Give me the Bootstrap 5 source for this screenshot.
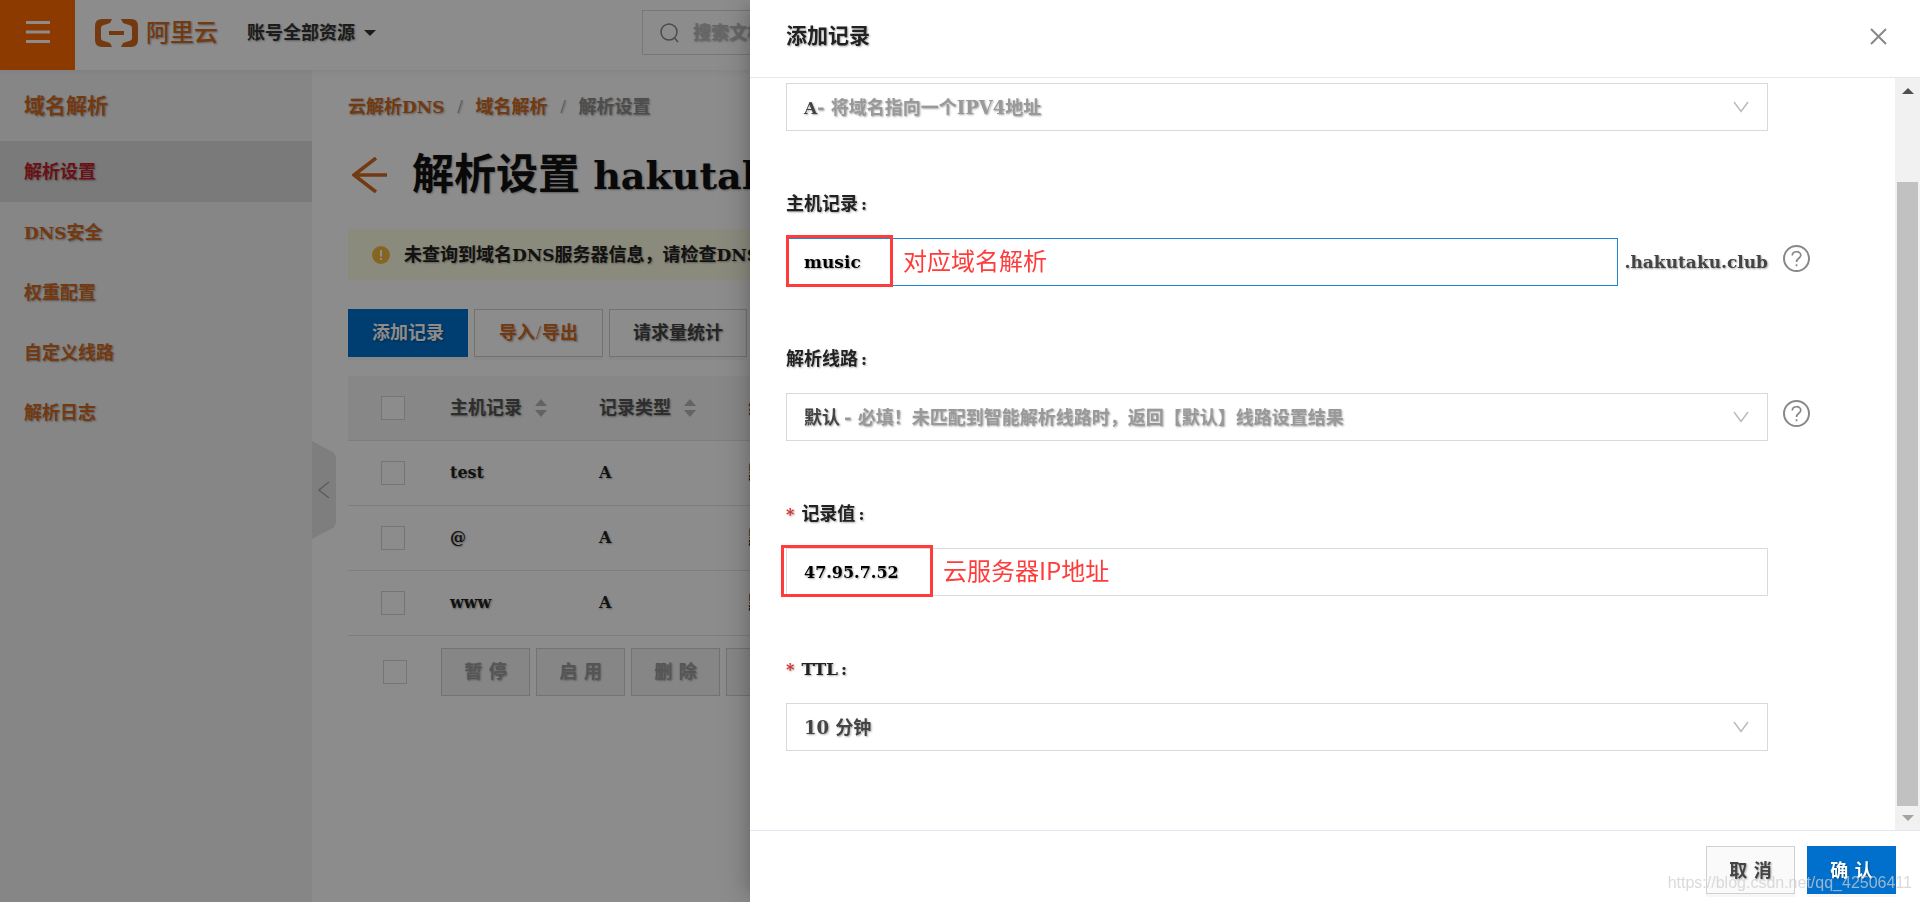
<!DOCTYPE html>
<html lang="zh-CN">
<head>
<meta charset="utf-8">
<meta name="viewport" content="width=device-width, initial-scale=1">
<title>解析设置</title>
<link rel="stylesheet" href="https://cdn.jsdelivr.net/npm/bootstrap@5.3.0/dist/css/bootstrap.min.css">
<style>
  body { font: bold 18px/24px "DejaVu Serif", "Noto Sans CJK SC", serif; color: #333; text-shadow: 1px 1px 2px rgba(0,0,0,.35); background: #fff; }
  a { color: chocolate; text-decoration: none; }
  svg { display: block; fill: none; flex: none; }
  .latin { font-size: 17px; }
  .shell { height: 100vh; }

  .topbar { height: 70px; box-shadow: 0 2px 6px rgba(0,0,0,.06); z-index: 2; }
  .menu-btn { width: 75px; background: #ff6a00; border: 0; }
  .brand-name { font-size: 24px; font-weight: 500; line-height: 32px; color: chocolate; }
  .account { margin-left: 29px; gap: 9px; }
  .caret-down { border: 6px solid transparent; border-top-color: #333; border-bottom: 0; }
  .search-area { padding: 10px 0 0 266px; }
  .search-box { width: 460px; height: 45px; border: 1px solid #d9d9d9; padding-left: 17px; gap: 14px; }
  .search-box input { font: inherit; border: 0; outline: 0; padding: 0; background: none; text-shadow: inherit; }
  .search-box input::placeholder { color: #bbb; }

  .side { width: 312px; background: #f5f5f5; }
  .side h2 { font-size: 21px; font-weight: bold; line-height: 71px; color: chocolate; padding-left: 24px; margin: 0; }
  .side .nav-link { height: 60px; padding: 19px 24px 0; color: chocolate; }
  .side .nav-link.active { background: #dedede; color: #c41f2a; height: 61px; }
  .fold { left: 312px; top: 441px; width: 24px; height: 98px; border: 0; padding: 0 0 0 6px; background: #e6e6e6; clip-path: polygon(0 0, 92% 12%, 100% 17%, 100% 83%, 92% 88%, 0 100%); }

  .content { padding: 25px 36px; overflow: hidden; }
  .crumbs { height: 24px; gap: 13px; color: #8c8c8c; margin-bottom: 23px; }
  .slash { font-family: "Liberation Serif", serif; font-weight: normal; }
  .act .slash { margin: 0 1px; }
  .page-title { height: 66px; font-size: 42px; font-weight: bold; line-height: 66px; color: #111; margin: 0; white-space: nowrap; }
  .page-title .latin { font-size: 38px; }
  .notice { background: #fcfce4; height: 51px; padding: 0 24px; gap: 14px; color: #222; white-space: nowrap; margin: 21px 0 29px; }
  .tools { gap: 6px; margin-bottom: 19px; }
  .act { font: inherit; text-shadow: inherit; height: 48px; padding: 0 23px; border: 1px solid #d0d0d0; border-radius: 0; background: #fff; color: #444; box-shadow: 0 3px 0 rgba(0,0,0,.03); white-space: nowrap; }
  .act.blue { background: #0070cc; border-color: #0070cc; color: #fff; }
  .act.link { color: chocolate; padding: 0 24px; }
  .act:disabled { background: #f5f5f5; border-color: #d2d2d2; color: #9c9c9c; opacity: 1; box-shadow: none; }
  .act.two { width: 89px; padding: 0; }

  .records { width: 100%; table-layout: fixed; }
  .records th { background: #f6f6f6; height: 64px; color: #555; }
  .records td { height: 65px; color: #222; }
  .records th, .records td { padding: 0 16px; border-bottom: 1px solid #e3e3e3; white-space: nowrap; }
  .records .latin { font-size: 16px; }
  .records .pick { width: 86px; padding-left: 33px; }
  .records .col-a { width: 149px; }
  .sorter { gap: 13px; }
  .tick { appearance: none; display: block; width: 24px; height: 24px; border: 1px solid #d5d5d5; background: #fff; margin: 0; }
  .batch { padding: 12px 0 0 35px; gap: 6px; }

  .veil { background: rgba(0,0,0,.45); z-index: 1040; }
  .drawer { left: 750px; z-index: 1045; box-shadow: -6px 0 16px -8px rgba(0,0,0,.2), -9px 0 28px rgba(0,0,0,.14); }
  .drawer-head { height: 78px; padding: 0 33px 5px 36px; border-bottom: 1px solid #e8e8e8; }
  .drawer-head h1 { font-size: 21px; line-height: 32px; font-weight: bold; color: #222; margin: 0; }
  .bare { border: 0; background: none; padding: 0; }
  .fields { padding: 5px 85px 0 36px; overflow: hidden; }
  .field { display: grid; grid-template-columns: 1fr 27px; column-gap: 15px; margin-bottom: 61px; }
  .field label { grid-column: 1 / 3; height: 24px; color: #222; margin-bottom: 22px; }
  .field .need { color: #d93026; font-size: 16px; margin-right: 7px; }
  .field .colon { margin-left: 3px; font-size: 16px; }
  .box { font: inherit; text-shadow: inherit; width: 100%; height: 48px; border: 1px solid #d9d9d9; border-radius: 0; padding: 0 17px; background: #fff; color: #000; outline: 0; }
  input.box { font-size: 16px; }
  input.box.live { border-color: #2185d0; font-size: 17px; }
  select.box { appearance: none; color: #999; padding-top: 1px; }
  .prefix { left: 18px; top: 13px; color: #444; pointer-events: none; }
  select.after-letter { padding-left: 30px; }
  select.after-word { padding-left: 57px; }
  select.box.solid { color: #444; }
  .arrow { right: 19px; top: 18px; pointer-events: none; }
  .suffix { color: #444; font-size: 17px; margin-left: 7px; }
  .help { margin-top: 7px; }

  .callout { border: 3px solid #ff3b3b; pointer-events: none; height: 52px; top: -3px; }
  .callout span { position: absolute; left: 100%; top: 4px; margin-left: 13px; font: 24px/36px "Noto Sans CJK SC", sans-serif; color: #ff3b3b; white-space: nowrap; text-shadow: none; }
  .host { left: 0; width: 107px; }
  .ip { left: -5px; width: 152px; }

  .rail { width: 25px; background: #f1f1f1; padding: 10px 2px 9px; }
  .rail .up { border: 6px solid transparent; border-bottom-color: #505050; border-top: 0; }
  .rail .down { border: 6px solid transparent; border-top-color: #a3a3a3; border-bottom: 0; }
  .rail .thumb { width: 21px; flex: 1; margin: 88px 0 9px; background: #c1c1c1; }
  .drawer-foot { height: 72px; padding: 15px 24px 0; gap: 12px; border-top: 1px solid #dfe8f0; }
  .drawer-foot .act { padding-top: 2px; }
  .drawer-foot .act.plain { background: #fafafa; }
  .stamp { right: 8px; bottom: 7px; font: 16px/24px "Liberation Sans", sans-serif; color: rgba(205,205,205,.75); text-shadow: none; pointer-events: none; }
</style>
</head>
<body>
<div class="shell d-flex flex-column overflow-hidden">
  <header class="topbar d-flex align-items-stretch position-relative bg-white flex-shrink-0">
    <button class="menu-btn d-flex justify-content-center pt-3" aria-label="菜单">
      <svg class="mt-1" width="24" height="24" stroke="#fff" stroke-width="3"><path d="M0 2.500H24M0 12H24M0 21.500H24"/></svg>
    </button>
    <a class="d-flex align-items-center ms-3 ps-1 pb-1" href="#">
      <svg width="43" height="28" viewBox="0 0 43 28"><path fill="#d2691e" d="M17 0H7Q0 0 0 7V21Q0 28 7 28H17L15 24 7.500 21.500Q6 21 6 19V9Q6 7 7.500 6.500L15 4ZM26 0H36Q43 0 43 7V21Q43 28 36 28H26L28 24 35.500 21.500Q37 21 37 19V9Q37 7 35.500 6.500L28 4ZM14 12H29V16H14Z"/></svg>
      <span class="brand-name ms-2">阿里云</span>
    </a>
    <a class="account d-flex align-items-center text-reset pb-1" href="#">账号全部资源<span class="caret-down"></span></a>
    <div class="search-area flex-fill">
      <div class="search-box d-flex align-items-center">
        <svg width="19" height="20" stroke="#888" stroke-width="1.5"><circle cx="9" cy="9" r="8"/><path d="M14.500 15L18 19"/></svg>
        <input type="search" class="flex-fill" placeholder="搜索文档" aria-label="搜索">
      </div>
    </div>
  </header>
  <div class="d-flex flex-fill">
    <aside class="side flex-shrink-0">
      <h2>域名解析</h2>
      <nav class="nav flex-column">
        <a class="nav-link active" href="#">解析设置</a>
        <a class="nav-link" href="#"><span class="latin">DNS</span>安全</a>
        <a class="nav-link" href="#">权重配置</a>
        <a class="nav-link" href="#">自定义线路</a>
        <a class="nav-link" href="#">解析日志</a>
      </nav>
    </aside>
    <button class="fold position-absolute" aria-label="收起">
      <svg width="12" height="18" stroke="#aaa" stroke-width="1.5"><path d="M11 1L1 9L11 17"/></svg>
    </button>
    <main class="content flex-fill">
      <nav class="crumbs d-flex">
        <a href="#">云解析<span class="latin">DNS</span></a><span class="slash">/</span><a href="#">域名解析</a><span class="slash">/</span><span>解析设置</span>
      </nav>
      <div class="d-flex align-items-center">
        <a class="ms-1 me-4" href="#" aria-label="返回"><svg width="36" height="36" stroke="#d2691e" stroke-width="3.500"><path d="M35 18H2M24 1L2 18L24 35"/></svg></a>
        <h1 class="page-title">解析设置<span class="latin"> hakutaku</span></h1>
      </div>
      <div class="notice d-flex align-items-center">
        <svg width="18" height="18"><circle cx="9" cy="9" r="9" fill="#f5b83d"/><path d="M9 4V10.500M9 12V14" stroke="#fff" stroke-width="2"/></svg>
        <span>未查询到域名<span class="latin">DNS</span>服务器信息，请检查<span class="latin">DNS</span></span>
      </div>
      <div class="tools d-flex">
        <button class="act blue">添加记录</button>
        <button class="act link">导入<span class="slash">/</span>导出</button>
        <button class="act">请求量统计</button>
      </div>
      <table class="records">
        <thead><tr>
          <th class="pick"><input class="tick" type="checkbox" aria-label="全选"></th>
          <th class="col-a"><div class="sorter d-flex align-items-center">主机记录<svg width="12" height="18"><path fill="#b5b5b5" d="M0 7L6 0L12 7ZM0 11L6 18L12 11Z"/></svg></div></th>
          <th class="col-a"><div class="sorter d-flex align-items-center">记录类型<svg width="12" height="18"><path fill="#b5b5b5" d="M0 7L6 0L12 7ZM0 11L6 18L12 11Z"/></svg></div></th>
          <th>线</th>
        </tr></thead>
        <tbody>
          <tr><td class="pick"><input class="tick" type="checkbox" aria-label="test"></td><td class="latin">test</td><td class="latin">A</td><td>默</td></tr>
          <tr><td class="pick"><input class="tick" type="checkbox" aria-label="@"></td><td class="latin">@</td><td class="latin">A</td><td>默</td></tr>
          <tr><td class="pick"><input class="tick" type="checkbox" aria-label="www"></td><td class="latin">www</td><td class="latin">A</td><td>默</td></tr>
        </tbody>
      </table>
      <div class="batch d-flex align-items-center">
        <input class="tick me-4" type="checkbox" aria-label="批量选择">
        <button class="act two ms-1" disabled>暂 停</button>
        <button class="act two" disabled>启 用</button>
        <button class="act two" disabled>删 除</button>
        <button class="act two" disabled aria-label="更多"></button>
      </div>
    </main>
  </div>
</div>

<div class="veil position-fixed top-0 start-0 w-100 h-100"></div>
<section class="drawer position-fixed top-0 bottom-0 end-0 bg-white d-flex flex-column" role="dialog" aria-label="添加记录">
  <div class="drawer-head d-flex align-items-center justify-content-between flex-shrink-0">
    <h1>添加记录</h1>
    <button class="bare" aria-label="关闭"><svg width="17" height="17" stroke="#888" stroke-width="2"><path d="M1 1L16 16M16 1L1 16"/></svg></button>
  </div>
  <div class="d-flex flex-fill overflow-hidden">
    <form class="fields flex-fill">
      <div class="field">
        <div class="position-relative">
          <select class="box after-letter" aria-label="记录类型"><option>- 将域名指向一个IPV4地址</option></select>
          <span class="prefix latin position-absolute">A</span>
          <svg class="arrow position-absolute" width="16" height="12" stroke="#bbb" stroke-width="1.5"><path d="M1 1L8 10.500L15 1"/></svg>
        </div>
      </div>
      <div class="field">
        <label for="host">主机记录<span class="colon">:</span></label>
        <div class="d-flex align-items-center position-relative">
          <input id="host" class="box live" type="text" value="music">
          <span class="suffix">.hakutaku.club</span>
          <div class="callout host position-absolute"><span>对应域名解析</span></div>
        </div>
        <svg class="help" width="27" height="27" viewBox="0 0 27 27" stroke="#888" stroke-width="2"><circle cx="13.500" cy="13.500" r="12.500"/><path d="M9.300 10.500C9.300 5.500 17.800 5.500 17.800 10.300C17.800 13.300 13.500 13.300 13.500 17M13.500 19.200V21.200" stroke-width="1.700"/></svg>
      </div>
      <div class="field">
        <label for="line">解析线路<span class="colon">:</span></label>
        <div class="position-relative">
          <select id="line" class="box after-word"><option>- 必填！未匹配到智能解析线路时，返回【默认】线路设置结果</option></select>
          <span class="prefix position-absolute">默认</span>
          <svg class="arrow position-absolute" width="16" height="12" stroke="#bbb" stroke-width="1.5"><path d="M1 1L8 10.500L15 1"/></svg>
        </div>
        <svg class="help" width="27" height="27" viewBox="0 0 27 27" stroke="#888" stroke-width="2"><circle cx="13.500" cy="13.500" r="12.500"/><path d="M9.300 10.500C9.300 5.500 17.800 5.500 17.800 10.300C17.800 13.300 13.500 13.300 13.500 17M13.500 19.200V21.200" stroke-width="1.700"/></svg>
      </div>
      <div class="field">
        <label for="value"><span class="need">*</span>记录值<span class="colon">:</span></label>
        <div class="position-relative">
          <input id="value" class="box" type="text" value="47.95.7.52">
          <div class="callout ip position-absolute"><span>云服务器IP地址</span></div>
        </div>
      </div>
      <div class="field">
        <label for="ttl"><span class="need">*</span><span class="latin">TTL</span><span class="colon">:</span></label>
        <div class="position-relative">
          <select id="ttl" class="box solid"><option>10 分钟</option></select>
          <svg class="arrow position-absolute" width="16" height="12" stroke="#bbb" stroke-width="1.5"><path d="M1 1L8 10.500L15 1"/></svg>
        </div>
      </div>
    </form>
    <div class="rail d-flex flex-column align-items-center flex-shrink-0"><span class="up"></span><span class="thumb"></span><span class="down"></span></div>
  </div>
  <div class="drawer-foot d-flex justify-content-end flex-shrink-0">
    <button class="act plain two">取 消</button>
    <button class="act blue two">确 认</button>
  </div>
  <span class="stamp position-absolute">https://blog.csdn.net/qq_42506411</span>
</section>
<script src="https://cdn.jsdelivr.net/npm/bootstrap@5.3.0/dist/js/bootstrap.bundle.min.js"></script>
</body>
</html>
